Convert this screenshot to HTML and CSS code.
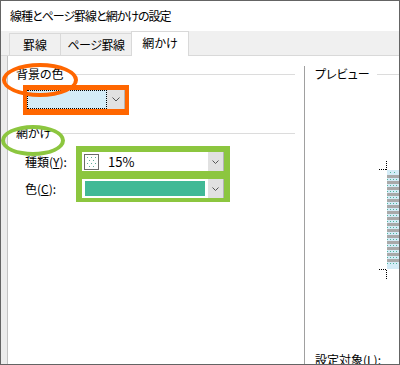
FILE: index.html
```html
<!DOCTYPE html>
<html lang="ja">
<head>
  <meta charset="UTF-8">
  <title>線種とページ罫線と網かけの設定</title>
  <link rel="stylesheet" href="styles.css">
</head>
<body>
  <div class="window">
    <div class="titlebar">線種とページ罫線と網かけの設定</div>
    <div class="tabbar">
      <div class="tab tab-1">罫線</div>
      <div class="tab tab-2">ページ罫線</div>
      <div class="tab tab-3 active">網かけ</div>
    </div>
    <div class="body">
      <div class="strip"></div>
      <div class="panel-left">
        <div class="group-head">背景の色</div>
        <div class="frame-orange">
          <div class="combo combo-fill">
            <div class="fill-box"></div>
            <div class="drop-btn drop-wide">
              <svg width="8" height="5" viewBox="0 0 8 5"><polyline points="0.5,0.5 4,4 7.5,0.5" fill="none" stroke="#555" stroke-width="1"/></svg>
            </div>
          </div>
        </div>
        <div class="group-head group-shade">網かけ</div>
        <div class="shade-row">
          <div class="labels">
            <div class="label">種類(<u>Y</u>):</div>
            <div class="label">色(<u>C</u>):</div>
          </div>
          <div class="frame-green">
            <div class="combo">
              <svg class="swatch" width="15" height="16" viewBox="0 0 15 16">
                <rect x="0.5" y="0.5" width="14" height="15" fill="#fff" stroke="#6b6b6b"/>
                <g fill="#5fae9a">
                  <rect x="3" y="3" width="1" height="1"/><rect x="7" y="3" width="1" height="1"/><rect x="11" y="3" width="1" height="1"/>
                  <rect x="5" y="6" width="1" height="1"/><rect x="9" y="6" width="1" height="1"/>
                  <rect x="3" y="9" width="1" height="1"/><rect x="7" y="9" width="1" height="1"/><rect x="11" y="9" width="1" height="1"/>
                  <rect x="5" y="12" width="1" height="1"/><rect x="9" y="12" width="1" height="1"/>
                </g>
              </svg>
              <span class="combo-text">15%</span>
              <div class="drop-btn">
                <svg width="7" height="4" viewBox="0 0 7 4"><polyline points="0.5,0.5 3.5,3.5 6.5,0.5" fill="none" stroke="#555" stroke-width="1"/></svg>
              </div>
            </div>
            <div class="combo">
              <div class="color-fill"></div>
              <div class="drop-btn">
                <svg width="7" height="4" viewBox="0 0 7 4"><polyline points="0.5,0.5 3.5,3.5 6.5,0.5" fill="none" stroke="#555" stroke-width="1"/></svg>
              </div>
            </div>
          </div>
        </div>
      </div>
      <div class="panel-right">
        <div class="group-head preview-head">プレビュー</div>
        <svg class="preview-art" width="22" height="120" viewBox="0 0 22 120">
          <defs>
            <pattern id="stripe" x="0" y="15" width="6" height="6" patternUnits="userSpaceOnUse">
              <rect x="0" y="0" width="6" height="3" fill="#a9a9a9"/>
              <rect x="1" y="4" width="1" height="1" fill="#4fb39b"/>
              <rect x="4" y="4" width="1" height="1" fill="#4fb39b"/>
            </pattern>
          </defs>
          <g stroke="#000" stroke-width="1" stroke-dasharray="1 1">
            <line x1="9.5" y1="1" x2="9.5" y2="10"/>
            <line x1="2" y1="9.5" x2="9" y2="9.5"/>
            <line x1="2" y1="109.5" x2="9" y2="109.5"/>
            <line x1="9.5" y1="110" x2="9.5" y2="119"/>
          </g>
          <rect x="10" y="10" width="12" height="99" fill="#d4ecf7"/>
          <rect x="10" y="15" width="12" height="90" fill="url(#stripe)"/>
          <rect x="13" y="12" width="1" height="1" fill="#4fb39b"/>
          <rect x="17" y="12" width="1" height="1" fill="#4fb39b"/>
        </svg>
        <div class="apply-label">設定対象(<u>L</u>):</div>
      </div>
    </div>
    <div class="mark mark-orange"></div>
    <div class="mark mark-green"></div>
  </div>
</body>
</html>
```

FILE: styles.css
```css
body {
  margin: 0;
  font-family: "Noto Sans CJK JP", "Noto Sans", sans-serif;
  font-size: 12px;
  font-feature-settings: "palt";
  color: #000;
}
.window {
  position: relative;
  width: 400px;
  height: 365px;
  box-sizing: border-box;
  border: 1px solid #646464;
  background: #fff;
  overflow: hidden;
  display: flex;
  flex-direction: column;
}
.titlebar {
  height: 30px;
  line-height: 30px;
  padding-left: 9px;
  letter-spacing: -1px;
}
.tabbar {
  height: 32px;
  background: #f0f0f0;
  border-bottom: 1px solid #d9d9d9;
  display: flex;
  align-items: flex-end;
  padding-left: 8px;
}
.tab {
  height: 21px;
  line-height: 21px;
  text-align: center;
  border-left: 1px solid #d9d9d9;
  border-top: 1px solid #d9d9d9;
}
.tab-1 { width: 50px; }
.tab-2 { width: 70px; letter-spacing: -0.5px; }
.tab.active {
  width: 56px;
  height: 24px;
  border-right: 1px solid #d9d9d9;
  background: #fff;
  margin-bottom: -1px;
}
.body {
  flex: 1;
  display: flex;
}
.strip {
  width: 6px;
  background: #ececec;
  border-right: 1px solid #c3c3c3;
}
.panel-left {
  width: 296px;
}
.group-head {
  display: flex;
  align-items: center;
  gap: 7px;
  height: 16px;
  line-height: 16px;
}
.group-head::after {
  content: "";
  flex: 1;
  height: 1px;
  background: #dcdcdc;
}
.panel-left .group-head {
  margin: 10px 9px 0 8px;
}
.frame-orange {
  width: fit-content;
  margin: 3px 0 0 15px;
  border-style: solid;
  border-color: #ff6600;
  border-width: 5px 4px 6px 4px;
}
.combo {
  width: 142px;
  height: 19px;
  background: #fff;
  display: flex;
  align-items: center;
}
.combo-fill {
  width: 98px;
}
.fill-box {
  width: 80px;
  height: 19px;
  box-sizing: border-box;
  border: 1px dotted #000;
  background: #d4ecf7;
}
.drop-btn {
  width: 16px;
  height: 19px;
  margin-left: auto;
  box-sizing: border-box;
  background: #e1e1e1;
  border-right: 1px solid #b4b4b4;
  display: flex;
  align-items: center;
  justify-content: center;
}
.drop-wide {
  width: 18px;
}
.shade-row {
  display: flex;
  margin: 5px 0 0 17px;
}
.labels {
  width: 51px;
  padding-top: 6px;
  display: flex;
  flex-direction: column;
  gap: 8px;
}
.label {
  height: 19px;
  line-height: 19px;
}
.frame-green {
  background: #8cc63f;
  padding: 6px 6px 4px 6px;
  display: flex;
  flex-direction: column;
  gap: 8px;
}
.swatch {
  margin-left: 2px;
  display: block;
}
.combo-text {
  margin-left: 9px;
  font-size: 13px;
}
.color-fill {
  width: 120px;
  height: 15px;
  margin-left: 3px;
  background: #41b996;
}
.panel-right {
  flex: 1;
  margin-top: 10px;
  border-left: 1px solid #a0a0a0;
  display: flex;
  flex-direction: column;
}
.preview-head {
  margin-left: 10px;
}
.preview-art {
  display: block;
  margin: 78px 0 0 72px;
}
.apply-label {
  margin: 72px 0 0 10px;
  line-height: 16px;
  white-space: nowrap;
}
.mark {
  position: absolute;
  box-sizing: border-box;
  border-radius: 50%;
}
.mark-orange {
  left: 1px;
  top: 62px;
  width: 76px;
  height: 34px;
  border: 4px solid #ff6600;
}
.mark-green {
  left: 0;
  top: 124px;
  width: 64px;
  height: 31px;
  border: 4px solid #8cc63f;
}
```
